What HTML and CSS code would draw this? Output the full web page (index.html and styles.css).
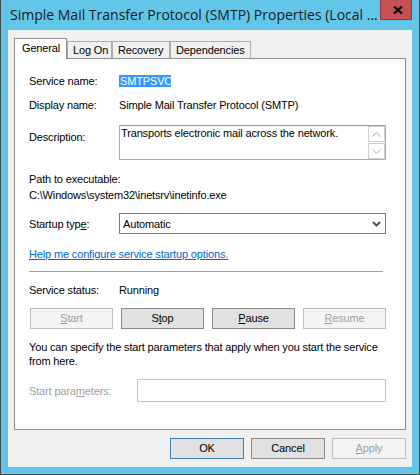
FILE: index.html
```html
<!DOCTYPE html>
<html>
<head>
<meta charset="utf-8">
<link rel="stylesheet" href="styles.css">
</head>
<body>
<div class="window">
  <div class="titlebar">
    <div class="title">Simple Mail Transfer Protocol (SMTP) Properties (Local ...</div>
    <div class="close">
      <svg width="10" height="8" viewBox="0 0 10 8"><path d="M1 0.5 L9 7.5 M9 0.5 L1 7.5" stroke="#000" stroke-width="2.2" fill="none"/></svg>
    </div>
  </div>
  <div class="client">
    <div class="tabs">
      <div class="tab selected t-general">General</div>
      <div class="tab t-logon">Log On</div>
      <div class="tab t-recovery">Recovery</div>
      <div class="tab t-deps">Dependencies</div>
    </div>
    <div class="panel">
      <div class="row r-name">
        <div class="label">Service name:</div>
        <div class="value"><span class="selected-text">SMTPSVC</span></div>
      </div>
      <div class="row r-display">
        <div class="label">Display name:</div>
        <div class="value">Simple Mail Transfer Protocol (SMTP)</div>
      </div>
      <div class="row r-desc">
        <div class="label desc-label">Description:</div>
        <div class="textbox">
          <div class="textbox-text">Transports electronic mail across the network.</div>
          <div class="scroll">
            <div class="sbtn"><svg width="9" height="5" viewBox="0 0 9 5"><path d="M0.5 4.5 L4.5 0.7 L8.5 4.5" stroke="#a8a8a8" stroke-width="1" fill="none"/></svg></div>
            <div class="sbtn"><svg width="9" height="5" viewBox="0 0 9 5"><path d="M0.5 0.5 L4.5 4.3 L8.5 0.5" stroke="#a8a8a8" stroke-width="1" fill="none"/></svg></div>
          </div>
        </div>
      </div>
      <div class="path">
        <div>Path to executable:</div>
        <div>C:\Windows\system32\inetsrv\inetinfo.exe</div>
      </div>
      <div class="row r-startup">
        <div class="label">Startup typ<u>e</u>:</div>
        <div class="combo">
          <span>Automatic</span>
          <svg width="9" height="6" viewBox="0 0 9 6"><path d="M1 1 L4.5 4.5 L8 1" stroke="#555" stroke-width="2" fill="none"/></svg>
        </div>
      </div>
      <div class="link">Help me configure service startup options.</div>
      <div class="sep"></div>
      <div class="row r-status">
        <div class="label">Service status:</div>
        <div class="value">Running</div>
      </div>
      <div class="svc-buttons">
        <div class="btn disabled"><u>S</u>tart</div>
        <div class="btn">S<u>t</u>op</div>
        <div class="btn"><u>P</u>ause</div>
        <div class="btn disabled"><u>R</u>esume</div>
      </div>
      <div class="para">You can specify the start parameters that apply when you start the service from here.</div>
      <div class="row r-params">
        <div class="label disabled-text">Start para<u>m</u>eters:</div>
        <div class="input"></div>
      </div>
    </div>
    <div class="footer">
      <div class="btn fbtn default">OK</div>
      <div class="btn fbtn">Cancel</div>
      <div class="btn fbtn disabled"><u>A</u>pply</div>
    </div>
  </div>
</div>
</body>
</html>
```

FILE: styles.css
```css
html, body {
  margin: 0;
  padding: 0;
  background: #62c6e9;
}
body {
  font-family: "Liberation Sans", Arial, sans-serif;
  font-size: 11px;
  letter-spacing: -0.15px;
  color: #000;
}
.window {
  width: 420px;
  height: 475px;
  box-sizing: border-box;
  background: #62c6e9;
  border: 1px solid #4a4a4a;
  border-top: none;
  padding: 0 7px 7px 7px;
  display: flex;
  flex-direction: column;
}
.titlebar {
  height: 30px;
  display: flex;
  align-items: flex-start;
  justify-content: space-between;
}
.title {
  font-family: "Open Sans", "Noto Sans", sans-serif;
  font-size: 14px;
  letter-spacing: 0;
  color: #1a1a1a;
  margin-left: 2px;
  line-height: 30px;
  white-space: nowrap;
}
.close {
  width: 32px;
  height: 20px;
  box-sizing: border-box;
  background: #c75050;
  border: 1px solid #8c3a3a;
  border-top: none;
  display: flex;
  align-items: center;
  justify-content: center;
  padding-left: 3px;
}
.client {
  flex: 1;
  background: #f0f0f0;
  padding: 8px 6px 0 6px;
  display: flex;
  flex-direction: column;
}
.tabs {
  display: flex;
  align-items: flex-end;
  height: 20px;
}
.tab {
  box-sizing: border-box;
  height: 17px;
  border: 1px solid #acacac;
  border-bottom: none;
  background: #f0f0f0;
  padding-left: 5px;
  line-height: 16px;
  white-space: nowrap;
}
.tab.selected {
  height: 21px;
  margin-bottom: -1px;
  background: #fff;
  border-color: #8c8c8c;
  position: relative;
  z-index: 1;
  padding-left: 7px;
  line-height: 19px;
}
.t-general { width: 53px; }
.t-logon { width: 45px; }
.t-recovery { width: 58px; }
.t-deps { width: 81px; }
.panel {
  box-sizing: border-box;
  height: 372px;
  background: #fff;
  border: 1px solid #8c8c8c;
  padding: 0 19px 0 14px;
  display: flex;
  flex-direction: column;
}
.row {
  display: grid;
  grid-template-columns: 90px 1fr;
  align-items: center;
}
.r-name { margin-top: 16px; height: 12px; line-height: 12px; }
.selected-text {
  display: inline-block;
  background: #3399ff;
  color: #fff;
  padding: 0 1px;
  line-height: 12px;
  width: 52px;
  box-sizing: border-box;
}
.r-display { margin-top: 12px; height: 13px; line-height: 13px; }
.r-desc { margin-top: 13px; align-items: start; }
.desc-label { margin-top: 6px; line-height: 13px; }
.textbox {
  box-sizing: border-box;
  height: 35px;
  border: 1px solid #abadb3;
  border-top-color: #9a9a9a;
  background: #fff;
  display: flex;
  justify-content: space-between;
}
.textbox-text {
  padding: 1px 0 0 1px;
  line-height: 13px;
}
.scroll {
  display: flex;
  flex-direction: column;
  justify-content: space-between;
  width: 17px;
}
.sbtn {
  box-sizing: border-box;
  height: 16px;
  border: 1px solid #cfcfcf;
  display: flex;
  align-items: center;
  justify-content: center;
}
.path {
  margin-top: 11px;
  line-height: 16px;
}
.r-startup { margin-top: 10px; }
.combo {
  box-sizing: border-box;
  height: 21px;
  border: 1px solid #7a7a7a;
  background: #fff;
  display: flex;
  align-items: center;
  justify-content: space-between;
  padding: 0 4px 0 3px;
}
.link {
  margin-top: 13px;
  line-height: 14px;
  color: #0066cc;
  text-decoration: underline;
}
.sep {
  margin-top: 10px;
  height: 1px;
  background: #a0a0a0;
  margin-right: 3px;
}
.r-status { margin-top: 11px; height: 14px; line-height: 14px; }
.svc-buttons {
  margin-top: 11px;
  margin-left: 1px;
  display: flex;
  justify-content: space-between;
}
.btn {
  box-sizing: border-box;
  width: 83px;
  height: 21px;
  line-height: 19px;
  text-align: center;
  background: #e1e1e1;
  border: 1px solid #8a8a8a;
}
.btn.disabled {
  background: #f4f4f4;
  border-color: #bfbfbf;
  color: #a0a0a0;
}
.btn.default {
  border-color: #3c7fb1;
}
.para {
  margin-top: 12px;
  line-height: 13.5px;
  padding-right: 2px;
}
.r-params {
  margin-top: 11px;
  grid-template-columns: 108px 1fr;
}
.disabled-text { color: #a0a0a0; }
.input {
  box-sizing: border-box;
  height: 23px;
  border: 1px solid #c4c4c4;
  background: #fff;
}
.footer {
  margin-top: 8px;
  display: flex;
  justify-content: flex-end;
  gap: 7px;
}
.fbtn { width: 74px; }
```
